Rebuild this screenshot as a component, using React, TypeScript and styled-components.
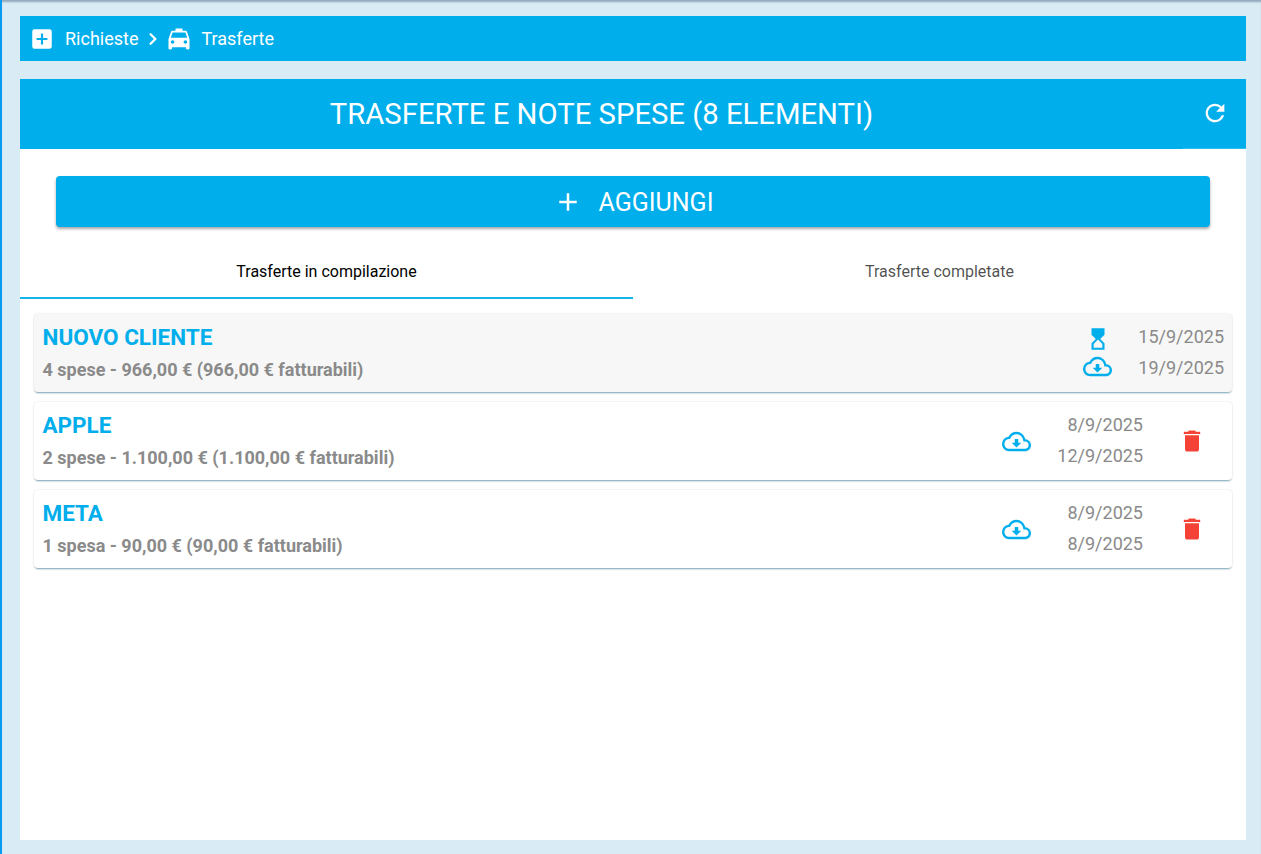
import React from 'react'
import styled, { createGlobalStyle } from 'styled-components'
import {
  MdAddBox,
  MdLocalTaxi,
  MdRefresh,
  MdAdd,
  MdDelete,
  MdHourglassTop,
  MdOutlineCloudDownload,
} from 'react-icons/md'
import { FaChevronRight } from 'react-icons/fa'

const GlobalStyle = createGlobalStyle`
  html, body {
    margin: 0;
    padding: 0;
    height: 100%;
    overflow: hidden;
    font-family: Roboto, "Liberation Sans", sans-serif;
  }
`

const SPage = styled.div`
  box-sizing: border-box;
  width: 1261px;
  height: 854px;
  background: #d9ebf5;
  border-left: 2px solid #0a9cf0;
  padding: 16px 15px 14px 18px;
  display: flex;
  flex-direction: column;
  box-shadow: inset 0 3px 2px -1px rgba(60, 90, 120, 0.45);
`

const SCrumbs = styled.div`
  height: 45px;
  flex: none;
  background: #00aeeb;
  color: #fff;
  display: flex;
  align-items: center;
  padding-left: 9px;
  font-size: 18px;
`

const SCrumbLabel = styled.span<{ $gap: number }>`
  display: flex;
  margin-left: ${p => p.$gap}px;
`

const SMain = styled.div`
  margin-top: 18px;
  flex: 1;
  background: #fff;
  display: flex;
  flex-direction: column;
`

const SHeader = styled.div`
  height: 70px;
  flex: none;
  background: #00aeeb;
  color: #fff;
  display: flex;
  align-items: center;
`

const STitle = styled.div`
  flex: 1;
  text-align: center;
  font-size: 29.25px;
`

const SRefresh = styled.div`
  box-sizing: border-box;
  width: 63px;
  height: 70px;
  padding-bottom: 2px;
  display: grid;
  place-items: center;
  border-bottom: 1px solid #33bdee;
`

const SAddButton = styled.div`
  box-sizing: border-box;
  margin: 27px 36px 0;
  height: 51px;
  padding-top: 1px;
  background: #00aeeb;
  color: #fff;
  border-radius: 4px;
  box-shadow: 0 2px 3px rgba(0, 0, 0, 0.35);
  display: flex;
  align-items: center;
  justify-content: center;
  gap: 16px;
  font-size: 25px;
`

const STabs = styled.div`
  margin-top: 18px;
  display: grid;
  grid-template-columns: 1fr 1fr;
`

const STab = styled.div<{ $active?: boolean }>`
  box-sizing: border-box;
  height: 54px;
  padding-top: 1px;
  display: flex;
  align-items: center;
  justify-content: center;
  font-size: 16px;
  color: ${p => (p.$active ? '#000' : 'rgba(0, 0, 0, 0.7)')};
  border-bottom: 2px solid ${p => (p.$active ? '#14b4ee' : 'transparent')};
`

const SList = styled.div`
  padding: 15px 14px 0;
  display: flex;
  flex-direction: column;
  gap: 10px;
`

const SCard = styled.div<{ $selected?: boolean }>`
  box-sizing: border-box;
  height: 78px;
  padding: 0 8px 0 9px;
  border-radius: 4px;
  background: ${p => (p.$selected ? '#f7f7f7' : '#fff')};
  box-shadow: 0 2px 2px -1px rgba(0, 80, 120, 0.5), 0 0 2px rgba(0, 0, 0, 0.15);
  display: flex;
  align-items: center;
`

const SInfo = styled.div`
  flex: 1;
  margin-left: -0.5px;
  padding-top: 1px;
`

const SName = styled.div`
  color: #00aeeb;
  font-size: 22.5px;
  font-weight: 700;
  line-height: 30px;
`

const SDetail = styled.div`
  margin-top: 3px;
  color: #8a8a8a;
  font-size: 18px;
  font-weight: 700;
  line-height: 30px;
`

const SIcons = styled.div`
  width: 27px;
  display: flex;
  flex-direction: column;
  align-items: center;
  justify-content: center;
  color: #00aeeb;
`

const SDates = styled.div`
  width: 113px;
  padding-bottom: 1px;
  text-align: right;
  color: #8a8a8a;
  font-size: 18px;
  line-height: 30.5px;
`

const STrash = styled.div`
  box-sizing: border-box;
  width: 81px;
  padding: 0 0 1px 17px;
  display: flex;
  justify-content: center;
  color: #f44336;
`

interface ITrip {
  name: string
  detail: string
  from: string
  to: string
  draft?: boolean
}

const trips: ITrip[] = [
  { name: 'NUOVO CLIENTE', detail: '4 spese - 966,00 € (966,00 € fatturabili)', from: '15/9/2025', to: '19/9/2025', draft: true },
  { name: 'APPLE', detail: '2 spese - 1.100,00 € (1.100,00 € fatturabili)', from: '8/9/2025', to: '12/9/2025' },
  { name: 'META', detail: '1 spesa - 90,00 € (90,00 € fatturabili)', from: '8/9/2025', to: '8/9/2025' },
]

const App: React.FC = () => {
  return (
    <SPage>
      <GlobalStyle />
      <SCrumbs>
        <MdAddBox size={26} />
        <SCrumbLabel $gap={10}>Richieste</SCrumbLabel>
        <SCrumbLabel $gap={8}><FaChevronRight size={14} /></SCrumbLabel>
        <SCrumbLabel $gap={5}><MdLocalTaxi size={28} /></SCrumbLabel>
        <SCrumbLabel $gap={8}>Trasferte</SCrumbLabel>
      </SCrumbs>
      <SMain>
        <SHeader>
          <STitle>TRASFERTE E NOTE SPESE (8 ELEMENTI)</STitle>
          <SRefresh><MdRefresh size={28} /></SRefresh>
        </SHeader>
        <SAddButton>
          <MdAdd size={30} />
          <span>AGGIUNGI</span>
        </SAddButton>
        <STabs>
          <STab $active>Trasferte in compilazione</STab>
          <STab>Trasferte completate</STab>
        </STabs>
        <SList>
          {trips.map(trip => (
            <SCard key={trip.name} $selected={trip.draft}>
              <SInfo>
                <SName>{trip.name}</SName>
                <SDetail>{trip.detail}</SDetail>
              </SInfo>
              <SIcons>
                {trip.draft && <MdHourglassTop size={26} />}
                <MdOutlineCloudDownload size={29} />
              </SIcons>
              <SDates>
                <div>{trip.from}</div>
                <div>{trip.to}</div>
              </SDates>
              {!trip.draft && <STrash><MdDelete size={28} /></STrash>}
            </SCard>
          ))}
        </SList>
      </SMain>
    </SPage>
  )
}

export default App
